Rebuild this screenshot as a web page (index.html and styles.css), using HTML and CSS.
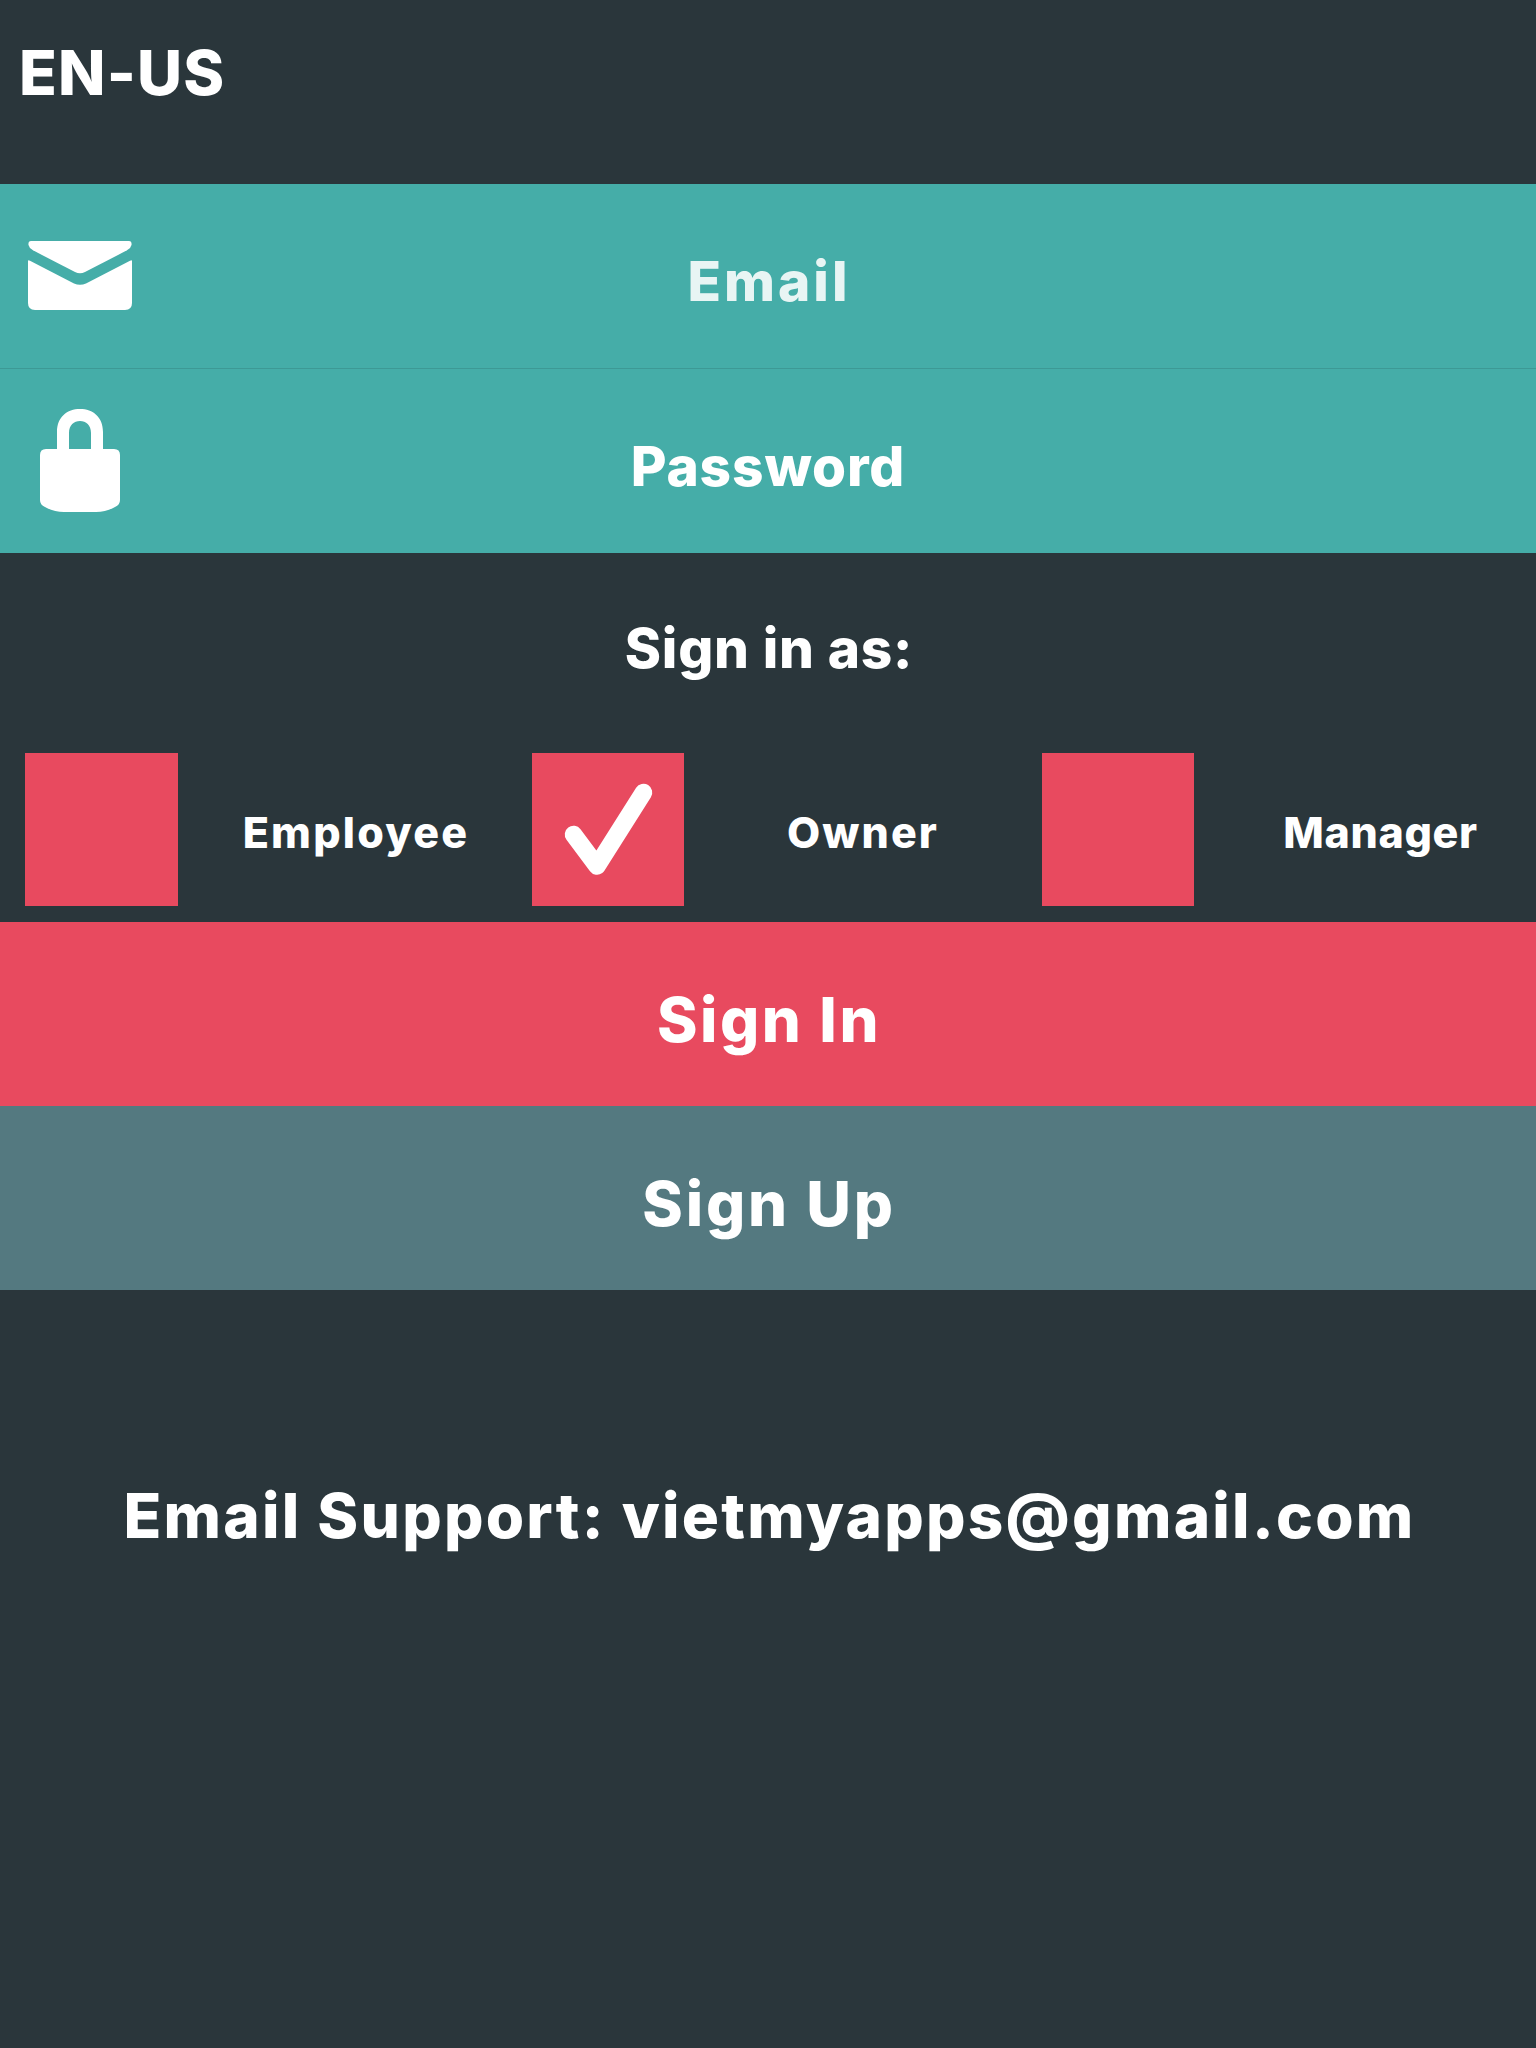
FILE: index.html
```
<!DOCTYPE html>
<html lang="en-US">

<head>
    <meta charset="UTF-8">
    <meta name="viewport" content="width=device-width, initial-scale=1.0">
    <title>Sign In</title>
    <link rel="stylesheet" href="styles.css">
</head>

<body>

    <header>
        <span class="language">EN-US</span>
    </header>

    <main>
        <div class="field email">
            <svg class="icon" viewBox="0 0 104 70" preserveAspectRatio="none">
                <path d="M3 0H101Q104 0 103.500 4Q103 7 99 9.500L57 31.500Q52 34 47 31.500L5 9.500Q1 7 .500 4Q0 0 3 0Z" />
                <path d="M0 20Q0 19 2 20L46 43Q52 46 58 43L102 20Q104 19 104 20V63Q104 70 97 70H7Q0 70 0 63Z" />
            </svg>
            <span class="placeholder">Email</span>
        </div>
        <div class="field password">
            <svg class="icon" viewBox="0 0 80 103">
                <path d="M17 40V23C17 8 27 0 40 0S63 8 63 23V40H74Q80 40 80 46V91Q80 96 75 98Q66 103 56 103H24Q14 103 5 98Q0 96 0 91V46Q0 40 6 40ZM29 40H51V24C51 16 46 12 40 12S29 16 29 24Z" />
            </svg>
            <span>Password</span>
        </div>

        <div class="role-title"><span>Sign in as:</span></div>

        <div class="roles">
            <div class="role">
                <div class="checkbox"></div>
                <span class="employee">Employee</span>
            </div>
            <div class="role">
                <div class="checkbox">
                    <svg viewBox="0 0 152 153">
                        <path d="M41.500 81.500L65 113L111.500 39.500" />
                    </svg>
                </div>
                <span class="owner">Owner</span>
            </div>
            <div class="role">
                <div class="checkbox"></div>
                <span class="manager">Manager</span>
            </div>
        </div>

        <div class="button sign-in"><span>Sign In</span></div>
        <div class="button sign-up"><span>Sign Up</span></div>
    </main>

    <footer>
        <span>Email Support: vietmyapps@gmail.com</span>
    </footer>

</body>

</html>
```
FILE: styles.css
```
* {
    box-sizing: border-box;
}

body {
    margin: 0;
    min-height: 2048px;
    background-color: #2a363b;
    color: #fff;
    font-family: 'Inter', sans-serif;
    font-weight: 800;
    line-height: 1;
    white-space: nowrap;
}

header {
    height: 184px;
    padding: 42px 0 0 19px;
    font-size: 62px;
    letter-spacing: 1.200px;
}

.field {
    display: grid;
    grid-template-columns: 160px 1fr 160px;
    align-items: center;
    justify-items: center;
    background-color: #45ada8;
    font-size: 55px;
}

.field span {
    padding-top: 11px;
}

.email {
    height: 185px;
    border-bottom: 1px solid #3d9995;
}

.email span {
    padding-left: 2px;
    letter-spacing: 3px;
}

.password {
    height: 184px;
    letter-spacing: 0.850px;
}

.icon {
    fill: #fff;
}

.email .icon {
    width: 104px;
    height: 69px;
    margin-bottom: 1px;
}

.password .icon {
    width: 80px;
    height: 103px;
    margin-bottom: 2px;
}

.placeholder {
    opacity: 0.88;
}

.role-title {
    height: 200px;
    padding: 68px 0 0 2px;
    text-align: center;
    font-size: 55px;
    letter-spacing: 0.800px;
}

.roles {
    display: grid;
    grid-template-columns: 507px 510px 1fr;
    height: 169px;
    padding-left: 25px;
    font-size: 43px;
}

.role {
    display: flex;
    height: 153px;
    align-items: center;
}

.role span {
    flex: 1;
    padding-top: 6px;
    text-align: center;
}

.role .employee {
    padding-left: 2px;
    letter-spacing: 2.200px;
}

.role .owner {
    letter-spacing: 2.100px;
}

.role .manager {
    padding-left: 31px;
    letter-spacing: 0.700px;
}

.checkbox {
    width: 152px;
    height: 153px;
    background-color: #e84a5f;
}

.role:first-child .checkbox {
    width: 153px;
}

.checkbox svg {
    display: block;
    fill: none;
    stroke: #fff;
    stroke-width: 17.500;
    stroke-linecap: round;
    stroke-linejoin: round;
}

.button {
    display: flex;
    height: 184px;
    padding: 11px 0 0 2px;
    align-items: center;
    justify-content: center;
    font-size: 61.500px;
}

.sign-in {
    background-color: #e84a5f;
    letter-spacing: 2.500px;
}

.sign-up {
    background-color: #547980;
    letter-spacing: 2.800px;
}

footer {
    padding: 195px 0 0 3px;
    text-align: center;
    font-size: 62px;
    letter-spacing: 2.230px;
}
```
